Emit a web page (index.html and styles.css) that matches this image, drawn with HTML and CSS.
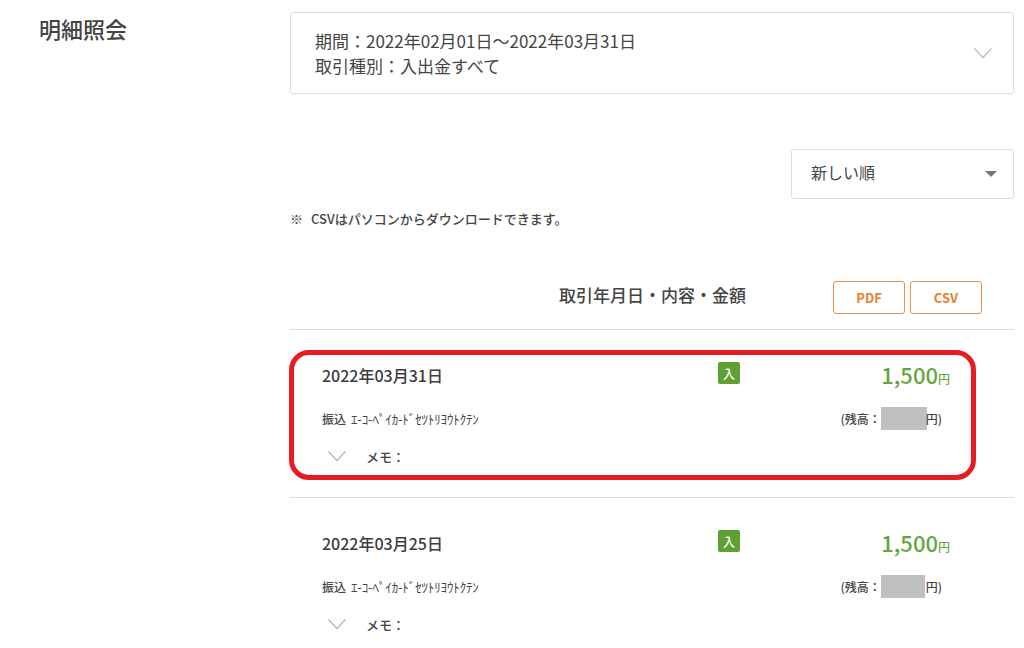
FILE: index.html
```html
<!DOCTYPE html>
<html lang="ja">
<head>
<meta charset="utf-8">
<title>明細照会</title>
<link rel="stylesheet" href="styles.css">
</head>
<body>
<div class="page">
  <h1 class="title">明細照会</h1>
  <main class="main">
    <section class="filter">
      <div class="filter-text">
        <div>期間：2022年02月01日～2022年03月31日</div>
        <div>取引種別：入出金すべて</div>
      </div>
      <svg class="chev-lg" width="20" height="12" viewBox="0 0 20 12"><path d="M1.5 1.5 10 10.5 18.5 1.5" fill="none" stroke="#c4c4c4" stroke-width="1.6"/></svg>
    </section>
    <div class="sort-row">
      <div class="sort">
        <span class="sort-label">新しい順</span>
        <span class="caret"></span>
      </div>
    </div>
    <p class="note"><span class="note-mark">※</span>CSVはパソコンからダウンロードできます。</p>
    <div class="list-head">
      <h2 class="list-title">取引年月日・内容・金額</h2>
      <div class="btns">
        <span class="btn">PDF</span>
        <span class="btn">CSV</span>
      </div>
    </div>
    <article class="row">
      <div class="row-top">
        <span class="date">2022年03月31日</span>
        <span class="badge">入</span>
        <span class="amount">1,500<small>円</small></span>
      </div>
      <div class="row-mid">
        <span class="desc">振込<span class="kana">ｴ-ｺ-ﾍﾟｲｶ-ﾄﾞｾﾂﾄﾘﾖｳﾄｸﾃﾝ</span></span>
        <span class="balance">(残高：<span class="mask mask-a"></span>円)</span>
      </div>
      <div class="memo">
        <svg class="chev" width="20" height="12" viewBox="0 0 20 12"><path d="M1.5 1.5 10 10.5 18.5 1.5" fill="none" stroke="#c0c0c0" stroke-width="1.8"/></svg>
        <span>メモ：</span>
      </div>
    </article>
    <article class="row">
      <div class="row-top">
        <span class="date">2022年03月25日</span>
        <span class="badge">入</span>
        <span class="amount">1,500<small>円</small></span>
      </div>
      <div class="row-mid">
        <span class="desc">振込<span class="kana">ｴ-ｺ-ﾍﾟｲｶ-ﾄﾞｾﾂﾄﾘﾖｳﾄｸﾃﾝ</span></span>
        <span class="balance">(残高：<span class="mask mask-b"></span>円)</span>
      </div>
      <div class="memo">
        <svg class="chev" width="20" height="12" viewBox="0 0 20 12"><path d="M1.5 1.5 10 10.5 18.5 1.5" fill="none" stroke="#c0c0c0" stroke-width="1.8"/></svg>
        <span>メモ：</span>
      </div>
    </article>
  </main>
  <div class="highlight"></div>
</div>
</body>
</html>
```
FILE: styles.css
```css
* { box-sizing: border-box; }
html, body { margin: 0; padding: 0; height: 648px; overflow: hidden; background: #fff; }
body { font-family: "Noto Sans CJK JP", "Noto Sans", sans-serif; color: #444; }
.page { position: relative; display: grid; grid-template-columns: 290px 724px; height: 648px; }
.title { margin: 14px 0 0 39px; font-size: 22px; line-height: 29px; font-weight: 500; color: #444; }
.main { padding-top: 12px; }
.filter { height: 82px; border: 1px solid #ddd; border-radius: 3px; padding: 0 20px 0 24px; display: flex; align-items: center; justify-content: space-between; }
.filter-text { font-size: 17px; line-height: 25px; }
.sort-row { margin-top: 55px; display: flex; justify-content: flex-end; }
.sort { width: 223px; height: 50px; border: 1px solid #ddd; border-radius: 3px; padding: 0 16px 0 19px; display: flex; align-items: center; justify-content: space-between; font-size: 16px; }
.sort-label { margin-top: -5px; }
.caret { width: 0; height: 0; border-left: 6px solid transparent; border-right: 6px solid transparent; border-top: 6px solid #777; }
.note { margin: 11px 0 0; font-size: 13px; line-height: 18px; font-weight: 500; }
.note-mark { margin-right: 8px; font-weight: 400; }
.list-head { margin-top: 53px; height: 49px; display: flex; align-items: flex-start; border-bottom: 1px solid #ddd; }
.list-title { margin: 0 0 0 269px; font-size: 17px; line-height: 28px; font-weight: 500; }
.btns { margin-left: 87px; display: flex; gap: 5px; }
.btn { width: 72px; height: 33px; border: 1.5px solid #e8913f; border-radius: 3px; display: flex; align-items: center; justify-content: center; font-size: 13px; font-weight: 700; color: #e8802f; }
.row { height: 168px; border-bottom: 1px solid #ddd; padding: 29px 64px 0 32px; }
.row-top { display: grid; grid-template-columns: 396px 1fr auto; grid-template-rows: 34px; height: 34px; align-items: center; }
.date { margin-top: -2px; font-size: 16px; font-weight: 500; color: #3c3c3c; }
.badge { width: 22px; height: 22px; margin-top: -6px; background: #5fa033; color: #fff; border-radius: 2px; font-size: 12px; font-weight: 500; display: flex; align-items: center; justify-content: center; }
.amount { margin-left: -1px; font-size: 22px; line-height: 34px; font-weight: 500; color: #64a53c; }
.amount small { font-size: 12px; font-weight: 500; }
.row-mid { margin-top: 8px; height: 34px; display: flex; align-items: center; justify-content: space-between; font-size: 12px; }
.desc { font-weight: 500; }
.kana { display: inline-block; margin-left: 5px; font-size: 13px; font-weight: 400; letter-spacing: -0.15px; }
.balance { display: flex; align-items: center; font-weight: 500; margin-right: 8px; }
.mask { display: block; background: #c0c0c0; height: 23px; }
.mask-a { width: 46px; margin-right: -1px; }
.mask-b { width: 44px; margin-right: 1px; }
.memo { margin-top: 9px; padding-left: 5px; height: 24px; display: flex; align-items: center; gap: 19px; font-size: 13px; font-weight: 500; }
.highlight { position: absolute; left: 289px; top: 350px; width: 687px; height: 130px; border: 5px solid #e51c23; border-radius: 20px; pointer-events: none; }
```
